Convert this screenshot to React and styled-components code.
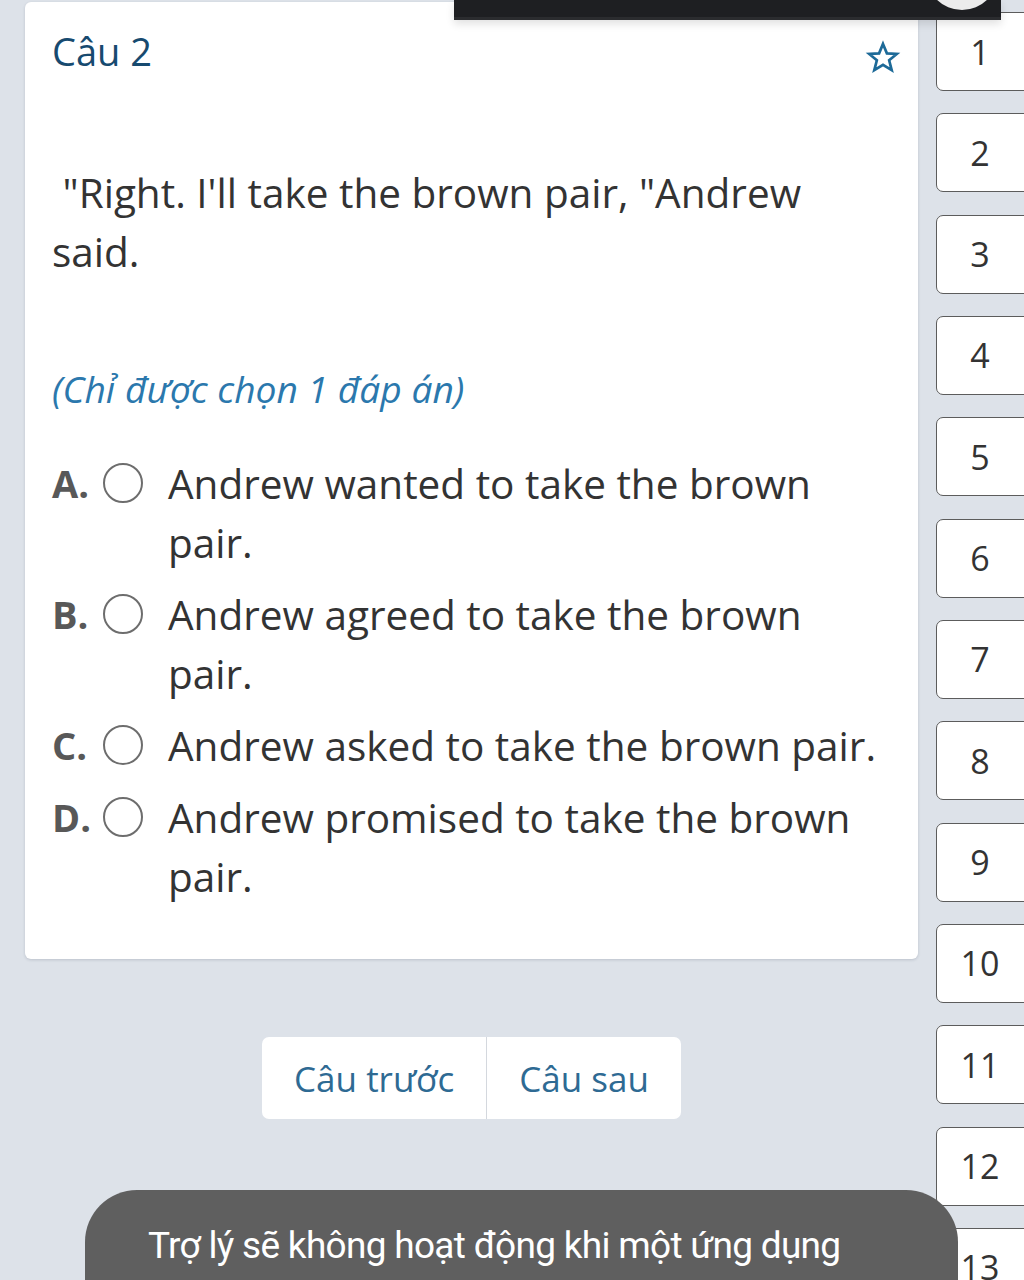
import React from "react";
import styled, { createGlobalStyle } from "styled-components";

const GlobalStyle = createGlobalStyle`
  html, body {
    margin: 0;
    padding: 0;
    background: #dde2e9;
    height: 1280px;
    overflow: hidden;
  }
  * { box-sizing: border-box; }
`;

const Page = styled.div`
  display: flex;
  align-items: flex-start;
  gap: 18px;
  padding: 2px 0 0 25px;
  width: 1024px;
  height: 1280px;
  overflow: hidden;
  font-family: "Open Sans", "Noto Sans", sans-serif;
  position: relative;
`;

const Main = styled.div`
  width: 893px;
  flex: none;
  display: flex;
  flex-direction: column;
`;

const Card = styled.div`
  background: #ffffff;
  border-radius: 6px;
  box-shadow: 0 1px 3px rgba(40, 50, 70, 0.18);
  padding: 23px 27px 53px 27px;
`;

const Header = styled.div`
  display: flex;
  justify-content: space-between;
  align-items: flex-start;
  margin-right: -10px;
`;

const Title = styled.h2`
  margin: 0;
  font-size: 38px;
  line-height: 52px;
  font-weight: 500;
  color: #174a6f;
`;

const StarWrap = styled.span`
  display: flex;
  margin-top: 15px;
`;

const Question = styled.p`
  margin: 86px 0 0;
  font-size: 40.5px;
  line-height: 59px;
  color: #333333;
`;

const Hint = styled.p`
  margin: 83px 0 0;
  font-size: 37.2px;
  line-height: 50px;
  font-style: italic;
  color: #2b78ad;
`;

const Options = styled.div`
  display: flex;
  flex-direction: column;
  gap: 13px;
  margin-top: 40px;
`;

const Option = styled.div`
  display: flex;
  align-items: flex-start;
`;

const Letter = styled.span`
  flex: none;
  width: 51px;
  font-size: 38px;
  line-height: 59px;
  font-weight: 700;
  color: #585858;
`;

const Radio = styled.span`
  flex: none;
  width: 40px;
  height: 40px;
  margin-top: 9px;
  border: 2px solid #6d6d6d;
  border-radius: 50%;
`;

const OptionText = styled.span`
  margin-left: 25px;
  font-size: 40.5px;
  line-height: 59px;
  color: #333333;
  max-width: 720px;
`;

const Nav = styled.div`
  display: flex;
  justify-content: center;
  margin-top: 78px;
`;

const ButtonGroup = styled.div`
  display: inline-flex;
  background: #ffffff;
  border-radius: 7px;
  height: 82px;
  overflow: hidden;
`;

const NavButton = styled.button`
  border: none;
  background: transparent;
  font-family: "Open Sans", "Noto Sans", sans-serif;
  font-size: 35px;
  color: #2e6a93;
  padding: 0 ${(p) => p.$pad}px;
  border-left: ${(p) => (p.$divider ? "1px solid #d4d8de" : "none")};
`;

const Sidebar = styled.div`
  flex: none;
  display: flex;
  flex-direction: column;
  gap: 22.33px;
  padding-top: 10px;
`;

const NumBox = styled.div`
  width: 100px;
  height: 79px;
  background: #ffffff;
  border: 1.5px solid #5c5c5c;
  border-radius: 7px;
  padding-right: 12px;
  display: flex;
  align-items: center;
  justify-content: center;
  font-size: 34px;
  color: #333333;
`;

const TopBar = styled.div`
  position: absolute;
  left: 454px;
  top: 0;
  width: 547px;
  height: 20px;
  background: #1e1f22;
  border-bottom: 3px solid #2b2c2f;
  box-shadow: 0 4px 8px rgba(0, 0, 0, 0.12);
  overflow: hidden;
`;

const Knob = styled.div`
  position: absolute;
  left: 472px;
  top: -62px;
  width: 72px;
  height: 72px;
  border-radius: 50%;
  background: #ececec;
`;

const Toast = styled.div`
  position: absolute;
  left: 85px;
  top: 1190px;
  width: 873px;
  height: 200px;
  background: #5f5f5f;
  border-radius: 52px;
  padding: 29px 95px 0 63px;
  font-family: Roboto, "Noto Sans", sans-serif;
  font-size: 37px;
  line-height: 54px;
  letter-spacing: -0.7px;
  color: #ffffff;
`;

function StarIcon() {
  return (
    <svg width="36" height="36" viewBox="0 0 24 24" fill="none">
      <polygon
        points="12,2.6 14.6,8.9 21.2,9.3 16.1,13.5 17.8,20.1 12,16.5 6.2,20.1 7.9,13.5 2.8,9.3 9.4,8.9"
        stroke="#1d6a98"
        strokeWidth="1.8"
        strokeLinejoin="miter"
      />
    </svg>
  );
}

const options = [
  ["A.", "Andrew wanted to take the brown pair."],
  ["B.", "Andrew agreed to take the brown pair."],
  ["C.", "Andrew asked to take the brown pair."],
  ["D.", "Andrew promised to take the brown pair."],
];

export default function App() {
  return (
    <>
      <GlobalStyle />
      <Page>
        <Main>
          <Card>
            <Header>
              <Title>Câu 2</Title>
              <StarWrap>
                <StarIcon />
              </StarWrap>
            </Header>
            <Question>
              &nbsp;"Right. I'll take the brown pair, "Andrew said.
            </Question>
            <Hint>(Chỉ được chọn 1 đáp án)</Hint>
            <Options>
              {options.map(([l, t]) => (
                <Option key={l}>
                  <Letter>{l}</Letter>
                  <Radio />
                  <OptionText>{t}</OptionText>
                </Option>
              ))}
            </Options>
          </Card>
          <Nav>
            <ButtonGroup>
              <NavButton $pad={32}>Câu trước</NavButton>
              <NavButton $pad={32} $divider>
                Câu sau
              </NavButton>
            </ButtonGroup>
          </Nav>
        </Main>
        <Sidebar>
          {Array.from({ length: 13 }, (_, i) => (
            <NumBox key={i}>{i + 1}</NumBox>
          ))}
        </Sidebar>
        <TopBar>
          <Knob />
        </TopBar>
        <Toast>
          Trợ lý sẽ không hoạt động khi một ứng dụng khác đang dùng micrô
        </Toast>
      </Page>
    </>
  );
}
